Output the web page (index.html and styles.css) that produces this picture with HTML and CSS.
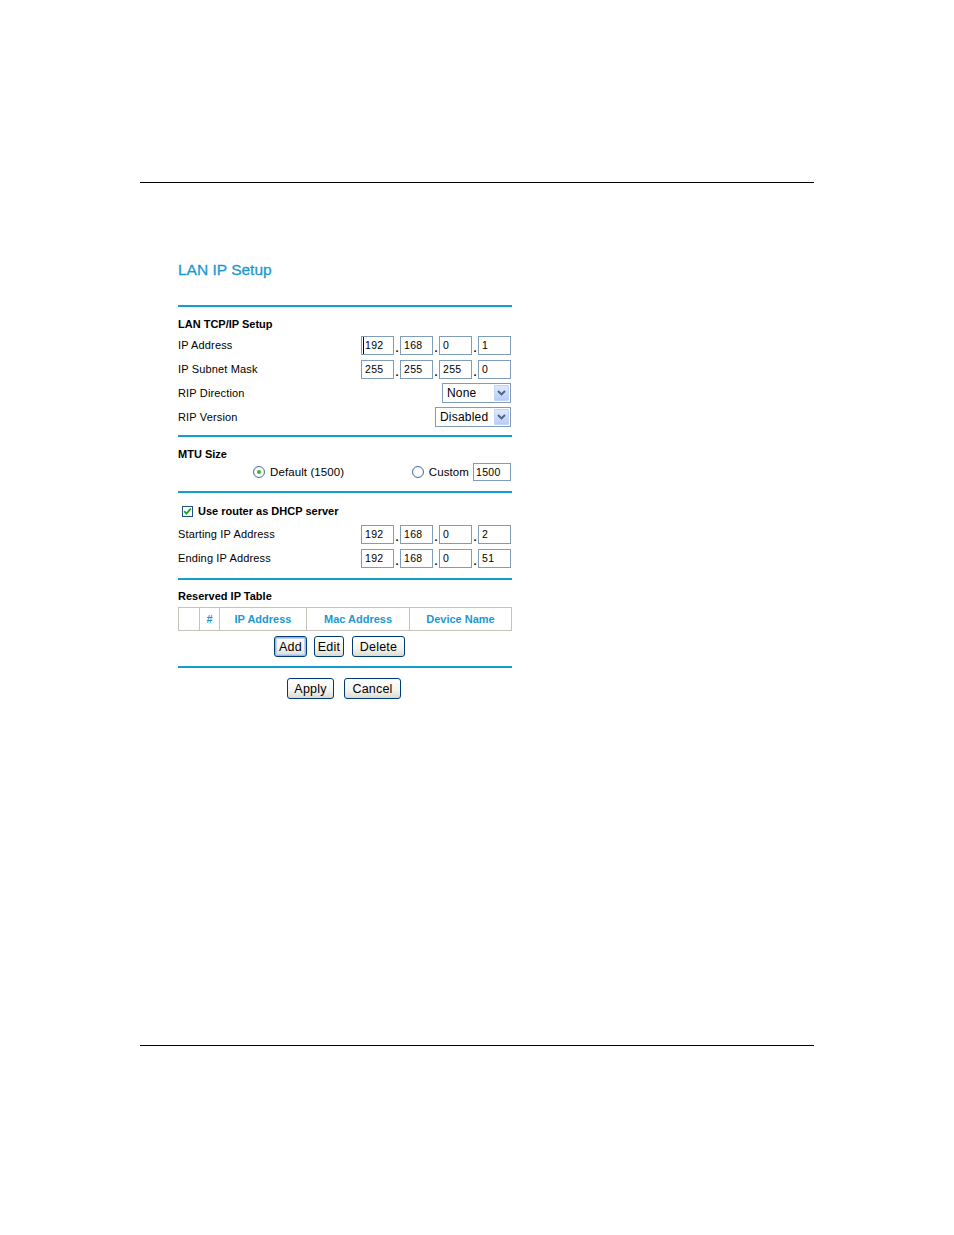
FILE: index.html
```html
<!DOCTYPE html>
<html>
<head>
<meta charset="utf-8">
<title>LAN IP Setup</title>
<link rel="stylesheet" href="styles.css">
</head>
<body>
<div class="page">
  <div class="rule-top"></div>

  <div class="form">
    <div class="title">LAN IP Setup</div>
    <div class="blue-rule first"></div>

    <div class="head-row"><span class="bold">LAN TCP/IP Setup</span></div>
    <div class="row">
      <span class="label">IP Address</span>
      <div class="ip">
        <span class="box caret">192</span><span class="dot">.</span><span class="box">168</span><span class="dot">.</span><span class="box">0</span><span class="dot">.</span><span class="box">1</span>
      </div>
    </div>
    <div class="row">
      <span class="label">IP Subnet Mask</span>
      <div class="ip">
        <span class="box">255</span><span class="dot">.</span><span class="box">255</span><span class="dot">.</span><span class="box">255</span><span class="dot">.</span><span class="box">0</span>
      </div>
    </div>
    <div class="row">
      <span class="label">RIP Direction</span>
      <div class="select sel-none"><span class="sel-text">None</span><span class="sel-btn"><svg width="9" height="6" viewBox="0 0 9 6"><path d="M1 1 L4.5 4.5 L8 1" fill="none" stroke="#4d6185" stroke-width="1.8"/></svg></span></div>
    </div>
    <div class="row">
      <span class="label">RIP Version</span>
      <div class="select sel-dis"><span class="sel-text">Disabled</span><span class="sel-btn"><svg width="9" height="6" viewBox="0 0 9 6"><path d="M1 1 L4.5 4.5 L8 1" fill="none" stroke="#4d6185" stroke-width="1.8"/></svg></span></div>
    </div>

    <div class="blue-rule r2"></div>
    <div class="head-row"><span class="bold">MTU Size</span></div>
    <div class="radio-row">
      <span class="radio on"></span><span class="rlabel">Default (1500)</span>
      <span class="radio custom"></span><span class="rlabel">Custom</span><span class="box mtu">1500</span>
    </div>

    <div class="blue-rule r3"></div>
    <div class="check-row">
      <span class="check"><svg width="11" height="11" viewBox="0 0 11 11"><path d="M2.2 5.2 L4.4 7.6 L8.8 2.6" fill="none" stroke="#21a121" stroke-width="1.8"/></svg></span>
      <span class="bold">Use router as DHCP server</span>
    </div>
    <div class="row">
      <span class="label">Starting IP Address</span>
      <div class="ip">
        <span class="box">192</span><span class="dot">.</span><span class="box">168</span><span class="dot">.</span><span class="box">0</span><span class="dot">.</span><span class="box">2</span>
      </div>
    </div>
    <div class="row">
      <span class="label">Ending IP Address</span>
      <div class="ip">
        <span class="box">192</span><span class="dot">.</span><span class="box">168</span><span class="dot">.</span><span class="box">0</span><span class="dot">.</span><span class="box">51</span>
      </div>
    </div>

    <div class="blue-rule r4"></div>
    <div class="head-row table-head"><span class="bold">Reserved IP Table</span></div>
    <table class="res">
      <tr>
        <th class="c0"></th>
        <th class="c1">#</th>
        <th class="c2">IP Address</th>
        <th class="c3">Mac Address</th>
        <th class="c4">Device Name</th>
      </tr>
    </table>
    <div class="btn-row btns1">
      <span class="btn focus w-add">Add</span>
      <span class="btn w-edit">Edit</span>
      <span class="btn w-del">Delete</span>
    </div>

    <div class="blue-rule r5"></div>
    <div class="btn-row btns2">
      <span class="btn w-apply">Apply</span>
      <span class="btn w-cancel">Cancel</span>
    </div>
  </div>

  <div class="rule-bottom"></div>
</div>
</body>
</html>
```
FILE: styles.css
```css
html, body {
  margin: 0;
  padding: 0;
  background: #ffffff;
}
.page {
  width: 954px;
  height: 1235px;
  display: flex;
  flex-direction: column;
  font-family: "Liberation Sans", Arial, sans-serif;
  color: #000;
}
.rule-top {
  margin: 182px 0 0 140px;
  width: 674px;
  height: 1px;
  background: #000;
  flex: none;
}
.rule-bottom {
  margin: auto 0 189px 140px;
  width: 674px;
  height: 1px;
  background: #000;
  flex: none;
}
.form {
  margin-left: 178px;
  width: 334px;
  display: flex;
  flex-direction: column;
  font-size: 11px;
}
.title {
  margin-top: 78px;
  height: 18px;
  line-height: 18px;
  font-size: 15.5px;
  color: #1b98cf;
  -webkit-text-stroke: 0.3px #1b98cf;
}
.blue-rule {
  height: 2px;
  background: #139ed2;
  flex: none;
}
.blue-rule.first { margin-top: 26px; }
.blue-rule.r2 { margin-top: 6px; }
.blue-rule.r3 { margin-top: 10px; }
.blue-rule.r4 { margin-top: 8px; }
.blue-rule.r5 { margin-top: 9px; }

.bold { font-weight: bold; }
.head-row {
  height: 26px;
  display: flex;
  align-items: flex-end;
  padding-bottom: 2px;
  box-sizing: border-box;
  line-height: 14px;
}
.head-row.table-head { height: 25px; }
.row {
  height: 24px;
  display: flex;
  align-items: center;
  justify-content: space-between;
}
.label { letter-spacing: 0.15px; }
.ip {
  display: flex;
  align-items: center;
  margin-right: 1px;
}
.box {
  display: inline-block;
  box-sizing: border-box;
  width: 33px;
  height: 19px;
  border: 1px solid #7f9db9;
  background: #fff;
  font-size: 10.5px;
  line-height: 17px;
  padding-left: 3px;
  letter-spacing: 0.3px;
}
.box.caret { box-shadow: inset 1px 0 0 #fff, inset 2px 0 0 #000; }
.dot {
  width: 6px;
  text-align: center;
  font-size: 11px;
  line-height: 11px;
  align-self: flex-end;
  padding-bottom: 1px;
  font-weight: bold;
}
.select {
  box-sizing: border-box;
  height: 20px;
  border: 1px solid #7f9db9;
  display: flex;
  align-items: center;
  justify-content: space-between;
  padding: 1px;
  margin-right: 1px;
  background: #fff;
  font-size: 12px;
}
.sel-none { width: 69px; }
.sel-dis { width: 76px; }
.sel-text { padding-left: 3px; letter-spacing: 0.2px; }
.sel-btn {
  width: 15px;
  height: 16px;
  box-sizing: border-box;
  border: 1px solid #c4d4f6;
  border-radius: 1px;
  background: linear-gradient(#dfe8fd, #b9cdf8);
  display: flex;
  align-items: center;
  justify-content: center;
}
.radio-row {
  height: 18px;
  display: flex;
  align-items: center;
}
.radio {
  width: 12px;
  height: 12px;
  box-sizing: border-box;
  border: 1px solid #4a6f99;
  border-radius: 50%;
  background: radial-gradient(circle, #fff 50%, #e4e4dc 100%);
  position: relative;
  margin-left: 75px;
  flex: none;
}
.radio.on::after {
  content: "";
  position: absolute;
  left: 3px;
  top: 3px;
  width: 4px;
  height: 4px;
  border-radius: 50%;
  background: #35b335;
}
.radio.custom { margin-left: auto; }
.rlabel { margin-left: 5px; font-size: 11.5px; letter-spacing: 0.1px; }
.box.mtu {
  width: 38px;
  height: 18px;
  line-height: 16px;
  margin-left: 4px;
  margin-right: 1px;
  padding-left: 2px;
}
.check-row {
  margin-top: 7px;
  height: 22px;
  display: flex;
  align-items: center;
  padding-left: 4px;
}
.check {
  width: 11px;
  height: 11px;
  box-sizing: border-box;
  border: 1px solid #1c5180;
  display: flex;
  align-items: center;
  justify-content: center;
  margin-right: 5px;
  background: #fff;
}
.check svg { flex: none; }
.res {
  border-collapse: collapse;
  width: 334px;
  table-layout: fixed;
  margin-top: 2px;
}
.res th {
  border: 1px solid #c7c3ba;
  height: 22px;
  padding: 0;
  color: #1b98cf;
  font-size: 11px;
  font-weight: bold;
  text-align: center;
}
.res .c0 { width: 20px; }
.res .c1 { width: 19px; }
.res .c2 { width: 86px; }
.res .c3 { width: 102px; }
.btn-row {
  display: flex;
  align-items: center;
}
.btns1 { margin-top: 5px; padding-left: 96px; gap: 7px; }
.btns2 { margin-top: 10px; padding-left: 109px; gap: 10px; }
.btn {
  box-sizing: border-box;
  height: 21px;
  border: 1px solid #003c74;
  border-radius: 3px;
  background: linear-gradient(#ffffff 0%, #f3f3ef 60%, #dcdad0 100%);
  font-size: 12.5px;
  display: flex;
  align-items: center;
  justify-content: center;
  letter-spacing: 0.2px;
}
.btn.focus {
  box-shadow: inset 0 0 0 1px #9bb9ef, inset 0 0 0 2px #c2d4f6;
}
.w-add { width: 33px; }
.w-edit { width: 30px; }
.w-del { width: 53px; margin-left: 1px; }
.w-apply { width: 47px; }
.w-cancel { width: 57px; }
```
